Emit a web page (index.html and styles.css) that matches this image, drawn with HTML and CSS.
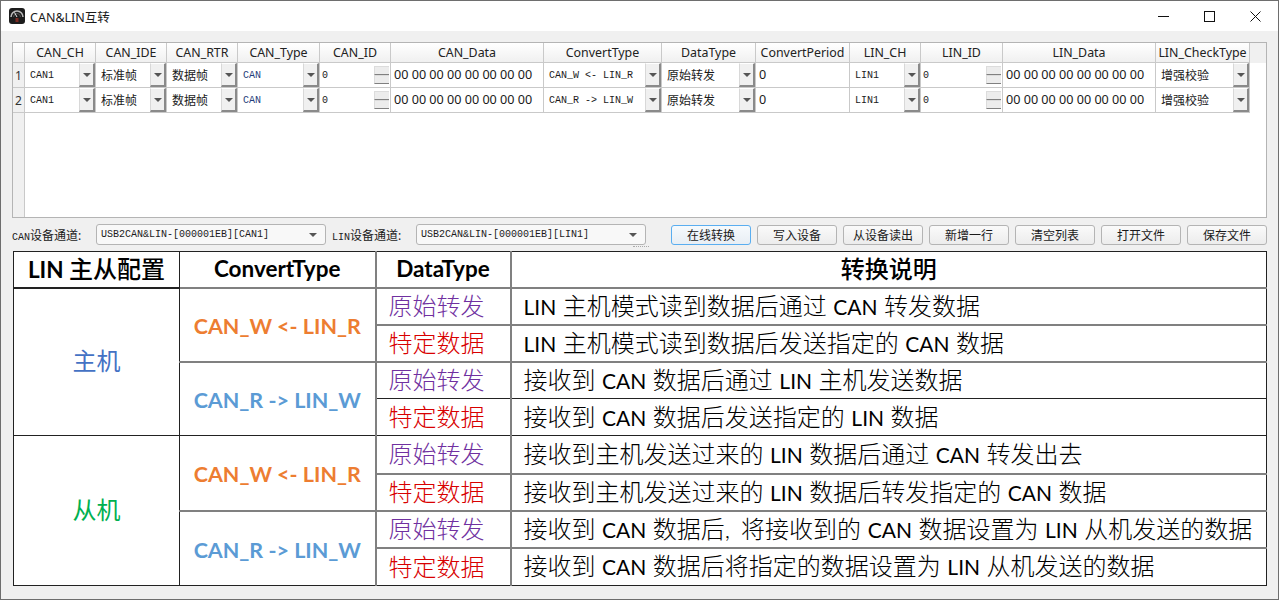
FILE: index.html
```html
<!DOCTYPE html>
<html lang="zh-CN">
<head>
  <meta charset="UTF-8" />
  <title>CAN&amp;LIN互转</title>
  <link rel="stylesheet" href="styles.css">
</head>
<body>
  <div class="window">
    <div class="titlebar">
      <svg class="app-icon" viewBox="0 0 16 16" width="16" height="16">
        <rect x="0" y="0" width="16" height="16" rx="3" fill="#1c1c1c"/>
        <path d="M2 9a6 6 0 0 1 12 0" fill="none" stroke="#b9b9b9" stroke-width="1.6"/>
        <path d="M4.5 9a3.5 3.5 0 0 1 7 0" fill="none" stroke="#555" stroke-width="1"/>
        <path d="M8 9L5.5 4.5" stroke="#e8e8e8" stroke-width="1"/>
        <rect x="6.5" y="10" width="3" height="4" fill="#7a2a22"/>
      </svg>
      <span class="app-title">CAN&amp;LIN互转</span>
      <div class="win-controls">
        <div class="win-btn"><svg width="11" height="11" viewBox="0 0 11 11"><path d="M0 5.5H11" stroke="#111" fill="none"/></svg></div>
        <div class="win-btn"><svg width="11" height="11" viewBox="0 0 11 11"><rect x="0.5" y="0.5" width="10" height="10" stroke="#111" fill="none"/></svg></div>
        <div class="win-btn"><svg width="11" height="11" viewBox="0 0 11 11"><path d="M0.5 0.5L10.5 10.5M10.5 0.5L0.5 10.5" stroke="#111" fill="none"/></svg></div>
      </div>
    </div>

    <div class="content">
      <div class="grid-box">
        <table class="grid">
          <colgroup>
            <col class="w-rh"><col class="w-71"><col class="w-71"><col class="w-71"><col class="w-82"><col class="w-71"><col class="w-153"><col class="w-118"><col class="w-94"><col class="w-94"><col class="w-71"><col class="w-82"><col class="w-153"><col class="w-94"><col>
          </colgroup>
          <thead>
            <tr>
              <th></th><th>CAN_CH</th><th>CAN_IDE</th><th>CAN_RTR</th><th>CAN_Type</th><th>CAN_ID</th><th>CAN_Data</th><th>ConvertType</th><th>DataType</th><th>ConvertPeriod</th><th>LIN_CH</th><th>LIN_ID</th><th>LIN_Data</th><th>LIN_CheckType</th><th class="blank"></th>
            </tr>
          </thead>
          <tbody>
            <tr>
              <td class="rh">1</td>
              <td><div class="combo"><span class="mono">CAN1</span><i class="drop"></i></div></td>
              <td><div class="combo"><span>标准帧</span><i class="drop"></i></div></td>
              <td><div class="combo"><span>数据帧</span><i class="drop"></i></div></td>
              <td><div class="combo"><span class="mono blue">CAN</span><i class="drop"></i></div></td>
              <td><div class="spin"><span class="mono">0</span><i class="spin-btns"><b></b><b></b></i></div></td>
              <td class="text">00 00 00 00 00 00 00 00</td>
              <td><div class="combo"><span class="mono">CAN_W &lt;- LIN_R</span><i class="drop"></i></div></td>
              <td><div class="combo"><span>原始转发</span><i class="drop"></i></div></td>
              <td class="text">0</td>
              <td><div class="combo"><span class="mono">LIN1</span><i class="drop"></i></div></td>
              <td><div class="spin"><span class="mono">0</span><i class="spin-btns"><b></b><b></b></i></div></td>
              <td class="text">00 00 00 00 00 00 00 00</td>
              <td><div class="combo"><span>增强校验</span><i class="drop"></i></div></td>
              <td class="blank"></td>
            </tr>
            <tr>
              <td class="rh">2</td>
              <td><div class="combo"><span class="mono">CAN1</span><i class="drop"></i></div></td>
              <td><div class="combo"><span>标准帧</span><i class="drop"></i></div></td>
              <td><div class="combo"><span>数据帧</span><i class="drop"></i></div></td>
              <td><div class="combo"><span class="mono blue">CAN</span><i class="drop"></i></div></td>
              <td><div class="spin"><span class="mono">0</span><i class="spin-btns"><b></b><b></b></i></div></td>
              <td class="text">00 00 00 00 00 00 00 00</td>
              <td><div class="combo"><span class="mono">CAN_R -&gt; LIN_W</span><i class="drop"></i></div></td>
              <td><div class="combo"><span>原始转发</span><i class="drop"></i></div></td>
              <td class="text">0</td>
              <td><div class="combo"><span class="mono">LIN1</span><i class="drop"></i></div></td>
              <td><div class="spin"><span class="mono">0</span><i class="spin-btns"><b></b><b></b></i></div></td>
              <td class="text">00 00 00 00 00 00 00 00</td>
              <td><div class="combo"><span>增强校验</span><i class="drop"></i></div></td>
              <td class="blank"></td>
            </tr>
            <tr class="filler">
              <td class="rh"></td>
              <td class="blank" colspan="14"></td>
            </tr>
          </tbody>
        </table>
      </div>

      <div class="toolbar">
        <label class="dev-label"><span class="mono">CAN</span>设备通道:</label>
        <div class="dev-combo"><span class="mono">USB2CAN&amp;LIN-[000001EB][CAN1]</span><i class="arrow"></i></div>
        <label class="dev-label"><span class="mono">LIN</span>设备通道:</label>
        <div class="dev-combo grip"><span class="mono">USB2CAN&amp;LIN-[000001EB][LIN1]</span><i class="arrow"></i></div>
        <div class="buttons">
          <button class="btn focus">在线转换</button>
          <button class="btn">写入设备</button>
          <button class="btn">从设备读出</button>
          <button class="btn">新增一行</button>
          <button class="btn">清空列表</button>
          <button class="btn">打开文件</button>
          <button class="btn">保存文件</button>
        </div>
      </div>

      <table class="doc">
        <colgroup>
          <col class="d1"><col class="d2"><col class="d3"><col>
        </colgroup>
        <thead>
          <tr>
            <th>LIN <span class="cjk">主从配置</span></th>
            <th>ConvertType</th>
            <th class="soft-l">DataType</th>
            <th class="soft-l"><span class="cjk">转换说明</span></th>
          </tr>
        </thead>
        <tbody>
          <tr class="soft-t">
            <td rowspan="4" class="role master">主机</td>
            <td rowspan="2" class="conv orange">CAN_W &lt;- LIN_R</td>
            <td class="kind purple soft-l">原始转发</td>
            <td class="desc soft-l"><span class="lat">LIN</span> 主机模式读到数据后通过 <span class="lat">CAN</span> 转发数据</td>
          </tr>
          <tr class="soft-t">
            <td class="kind red soft-l">特定数据</td>
            <td class="desc soft-l"><span class="lat">LIN</span> 主机模式读到数据后发送指定的 <span class="lat">CAN</span> 数据</td>
          </tr>
          <tr class="soft-t">
            <td rowspan="2" class="conv sky">CAN_R -&gt; LIN_W</td>
            <td class="kind purple soft-l">原始转发</td>
            <td class="desc soft-l">接收到 <span class="lat">CAN</span> 数据后通过 <span class="lat">LIN</span> 主机发送数据</td>
          </tr>
          <tr>
            <td class="kind red soft-l">特定数据</td>
            <td class="desc soft-l">接收到 <span class="lat">CAN</span> 数据后发送指定的 <span class="lat">LIN</span> 数据</td>
          </tr>
          <tr class="tall">
            <td rowspan="4" class="role slave">从机</td>
            <td rowspan="2" class="conv orange">CAN_W &lt;- LIN_R</td>
            <td class="kind purple soft-l">原始转发</td>
            <td class="desc soft-l">接收到主机发送过来的 <span class="lat">LIN</span> 数据后通过 <span class="lat">CAN</span> 转发出去</td>
          </tr>
          <tr class="soft-t">
            <td class="kind red soft-l">特定数据</td>
            <td class="desc soft-l">接收到主机发送过来的 <span class="lat">LIN</span> 数据后转发指定的 <span class="lat">CAN</span> 数据</td>
          </tr>
          <tr class="soft-t">
            <td rowspan="2" class="conv sky">CAN_R -&gt; LIN_W</td>
            <td class="kind purple soft-l">原始转发</td>
            <td class="desc soft-l">接收到 <span class="lat">CAN</span> 数据后<span class="comma">,</span>将接收到的 <span class="lat">CAN</span> 数据设置为 <span class="lat">LIN</span> 从机发送的数据</td>
          </tr>
          <tr class="soft-t tall">
            <td class="kind red soft-l">特定数据</td>
            <td class="desc soft-l">接收到 <span class="lat">CAN</span> 数据后将指定的数据设置为 <span class="lat">LIN</span> 从机发送的数据</td>
          </tr>
        </tbody>
      </table>
    </div>
  </div>
</body>
</html>
```

FILE: styles.css
```css
* {
  box-sizing: border-box;
}

html, body {
  margin: 0;
  padding: 0;
  overflow: hidden;
}

body {
  font-family: "Noto Sans", "Noto Sans CJK SC", sans-serif;
  font-size: 12px;
  color: #1a1a1a;
}

.window {
  width: 1279px;
  height: 600px;
  border: 1px solid #6e6e6e;
  background: #f0f0f0;
  display: flex;
  flex-direction: column;
}

/* title bar */
.titlebar {
  height: 30px;
  background: #fff;
  display: flex;
  align-items: center;
  padding-left: 8px;
  flex: none;
}

.app-icon {
  flex: none;
}

.app-title {
  margin-left: 5px;
  font-size: 12.5px;
}

.win-controls {
  margin-left: auto;
  display: flex;
}

.win-btn {
  width: 46px;
  height: 30px;
  display: flex;
  align-items: center;
  justify-content: center;
}

.content {
  padding: 11px 11px 0 11px;
}

/* top grid */
.grid-box {
  border: 1px solid #b4b4b4;
  background: #fff;
  height: 176px;
  overflow: hidden;
}

.grid {
  width: 100%;
  table-layout: fixed;
  border-collapse: separate;
  border-spacing: 0;
}

.w-rh { width: 12px; }
.w-71 { width: 71px; }
.w-82 { width: 82px; }
.w-94 { width: 94px; }
.w-118 { width: 118px; }
.w-153 { width: 153px; }

.grid th {
  height: 20px;
  padding: 0;
  font-weight: 400;
  font-size: 12.4px;
  color: #222;
  background: linear-gradient(#ffffff, #f0f0f0);
  border-right: 1px solid #c9c9c9;
  border-bottom: 1px solid #c9c9c9;
  white-space: nowrap;
}

.grid th.blank {
  background: #f0f0f0;
  border: none;
}

.grid td {
  height: 25px;
  padding: 0;
  border-right: 1px solid #c9c9c9;
  border-bottom: 1px solid #c9c9c9;
  white-space: nowrap;
  overflow: hidden;
}

.grid td.blank {
  border: none;
}

.grid td.rh {
  background: #f0f0f0;
  text-align: center;
  color: #333;
}

.grid td.text {
  padding: 0 0 2px 3px;
  font-size: 12.6px;
}

.filler td {
  height: 105px;
  border-bottom: none;
}

.grid .filler td.rh {
  border-bottom: none;
}

.mono {
  font-family: "Liberation Mono", "Noto Sans CJK SC", monospace;
  font-size: 10px;
}

.blue {
  color: #1f3d7a;
}

.combo {
  height: 24px;
  display: flex;
  align-items: center;
  justify-content: space-between;
  padding-left: 5px;
}

.drop {
  width: 16px;
  height: 24px;
  flex: none;
  background: #f0f0f0;
  border-top: 1px solid #fff;
  border-left: 1px solid #d8d8d8;
  border-right: 2px solid #8a8a8a;
  border-bottom: 2px solid #8a8a8a;
  display: flex;
  align-items: center;
  justify-content: center;
}

.drop::after {
  content: "";
  border-left: 4px solid transparent;
  border-right: 4px solid transparent;
  border-top: 4px solid #555;
}

.spin {
  height: 24px;
  display: flex;
  align-items: center;
  justify-content: space-between;
  padding: 0 1px 0 2px;
}

.spin-btns {
  width: 15px;
  display: flex;
  flex-direction: column;
}

.spin-btns b {
  height: 9px;
  background: #ececec;
  border-top: 1px solid #dcdcdc;
  border-left: 1px solid #dcdcdc;
  border-bottom: 1px solid #808080;
}

/* device row */
.toolbar {
  height: 21px;
  margin-top: 6px;
  display: flex;
  align-items: center;
}

.dev-label {
  width: 84px;
  flex: none;
  white-space: nowrap;
}

.dev-label + .dev-combo {
  margin-right: 6px;
}

.dev-combo {
  width: 230px;
  height: 21px;
  flex: none;
  border: 1px solid #b4b4b4;
  border-radius: 3px;
  background: #f8f8f8;
  display: flex;
  align-items: center;
  justify-content: space-between;
  padding: 0 8px 0 4px;
  position: relative;
}

.dev-combo.grip::after {
  content: "";
  position: absolute;
  right: -4px;
  bottom: -3px;
  width: 16px;
  border-bottom: 1px dotted #aaa;
}

.arrow {
  border-left: 4px solid transparent;
  border-right: 4px solid transparent;
  border-top: 4px solid #555;
}

.buttons {
  margin-left: 19px;
  display: flex;
  gap: 6px;
}

.btn {
  width: 80px;
  height: 20px;
  flex: none;
  padding: 0;
  border: 1px solid #b4b4b4;
  border-radius: 3px;
  background: linear-gradient(#fafafa, #ececec);
  font-family: inherit;
  font-size: 12px;
  color: #1a1a1a;
}

.btn.focus {
  border-color: #5aaef0;
  background: linear-gradient(#f6fafd, #e8eef4);
}

/* description table */
.doc {
  width: 1254px;
  margin: 6px 0 0 1px;
  table-layout: fixed;
  border-collapse: collapse;
  background: #fff;
  color: #000;
  font-family: Lato, "Noto Sans CJK SC", sans-serif;
  line-height: 28px;
}

.d1 { width: 166px; }
.d2 { width: 196px; }
.d3 { width: 135px; }

.doc th, .doc td {
  height: 37px;
  padding: 0;
  border: 1px solid #222;
  text-align: center;
  white-space: nowrap;
}

.doc th {
  height: 36px;
  font-size: 22.5px;
  font-weight: 700;
}

.doc .tall td {
  height: 38px;
}

.cjk {
  font-size: 24px;
  font-weight: 500;
}

.doc .soft-l {
  border-left: 2px solid #808080;
}

.doc .soft-t td, .doc .soft-t th {
  border-top: 2px solid #808080;
}

.doc td.role {
  font-size: 24px;
  padding-bottom: 1px;
  border-top-color: #222;
}

.master { color: #4472c4; }
.slave { color: #00b050; }

.doc td.conv {
  font-size: 21.5px;
  font-weight: 700;
  padding-top: 3px;
}

.orange { color: #ed7d31; }
.sky { color: #5b9bd5; }

.doc td.kind {
  font-size: 24px;
  font-weight: 300;
  text-align: left;
  padding: 0 0 0 12px;
}

.purple { color: #7030a0; }
.red { color: #d80000; }

.doc td.desc {
  text-align: left;
  padding: 0 0 0 12px;
  font-size: 24px;
  font-weight: 300;
}

.lat {
  font-size: 21px;
  font-weight: 400;
}

.comma {
  padding-right: 11px;
}
```
